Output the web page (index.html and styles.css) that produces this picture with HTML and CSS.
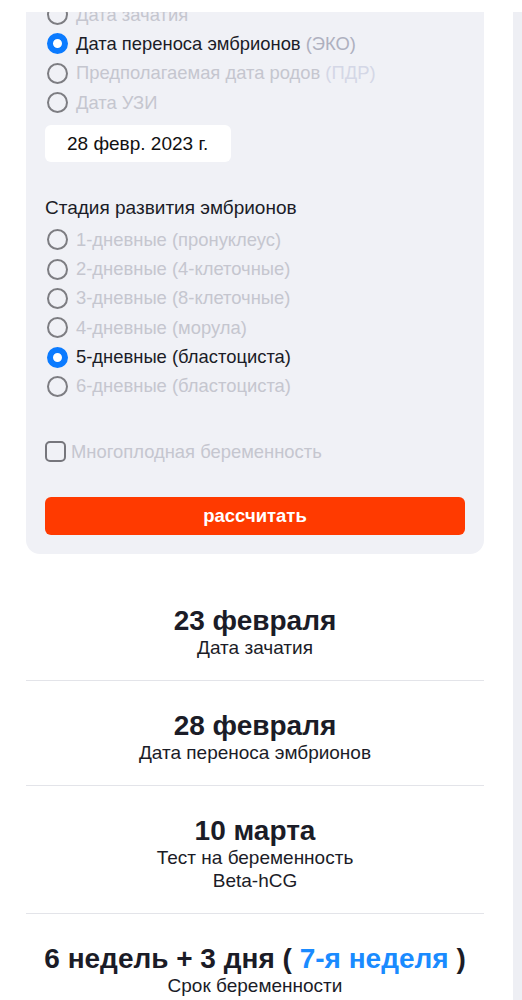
FILE: index.html
```html
<!DOCTYPE html>
<html lang="ru">
<head>
  <meta charset="UTF-8" />
  <meta name="viewport" content="width=device-width, initial-scale=1.0"/>
  <title>Калькулятор срока беременности ЭКО</title>
  <link rel="stylesheet" href="styles.css">
</head>
<body>
  <div class="topbar"></div>
  <div class="page">
    <main class="main">
      <form class="calc">
        <div class="options first">
          <label class="option muted"><input type="radio" name="base"> Дата зачатия</label>
          <label class="option"><input type="radio" name="base" checked> Дата переноса эмбрионов <span class="hint">(ЭКО)</span></label>
          <label class="option muted"><input type="radio" name="base"> Предполагаемая дата родов <span class="hint light">(ПДР)</span></label>
          <label class="option muted"><input type="radio" name="base"> Дата УЗИ</label>
        </div>

        <div class="date-field">28 февр. 2023 г.</div>

        <h3 class="group-title">Стадия развития эмбрионов</h3>
        <div class="options">
          <label class="option muted"><input type="radio" name="stage"> 1-дневные (пронуклеус)</label>
          <label class="option muted"><input type="radio" name="stage"> 2-дневные (4-клеточные)</label>
          <label class="option muted"><input type="radio" name="stage"> 3-дневные (8-клеточные)</label>
          <label class="option muted"><input type="radio" name="stage"> 4-дневные (морула)</label>
          <label class="option"><input type="radio" name="stage" checked> 5-дневные (бластоциста)</label>
          <label class="option muted"><input type="radio" name="stage"> 6-дневные (бластоциста)</label>
        </div>

        <label class="check muted"><input type="checkbox"> Многоплодная беременность</label>

        <button type="button" class="submit">рассчитать</button>
      </form>

      <div class="results">
        <div class="result">
          <div class="result-value">23 февраля</div>
          <div class="result-label">Дата зачатия</div>
        </div>
        <div class="result">
          <div class="result-value">28 февраля</div>
          <div class="result-label">Дата переноса эмбрионов</div>
        </div>
        <div class="result">
          <div class="result-value">10 марта</div>
          <div class="result-label">Тест на беременность<br>Beta-hCG</div>
        </div>
        <div class="result">
          <div class="result-value">6 недель + 3 дня ( <span class="week">7-я неделя</span> )</div>
          <div class="result-label">Срок беременности</div>
        </div>
      </div>
    </main>
    <div class="side"></div>
  </div>
</body>
</html>
```

FILE: styles.css
```css
body {
  margin: 0;
  font-family: "Liberation Sans", Arial, sans-serif;
  color: #1b1c27;
  background: #fff;
}

.topbar {
  height: 12px;
  background: #fff;
}

.page {
  display: flex;
}

.main {
  width: 458px;
  padding: 0 26px;
  flex: none;
}

.side {
  flex: 1;
  margin-left: 3px;
  background: #eeeff4;
}

.calc {
  background: #f0f1f6;
  border-radius: 0 0 14px 14px;
  padding: 0 19px 19px;
  overflow: hidden;
}

.options {
  display: flex;
  flex-direction: column;
}
.options.first {
  margin-top: -12px;
}

.option {
  display: flex;
  align-items: center;
  height: 29.3px;
  font-size: 18.4px;
  white-space: nowrap;
}
.option input {
  appearance: none;
  -webkit-appearance: none;
  width: 21px;
  height: 21px;
  margin: 0 8px 0 2px;
  border: 2px solid #7d7d82;
  border-radius: 50%;
  box-sizing: border-box;
  flex: none;
}
.option input:checked {
  border: 6px solid #0b7bff;
  background: #fff;
}
.option .hint {
  color: #aeb0bf;
  margin-left: 5px;
}
.option .hint.light {
  color: #d4d7e6;
}
.muted {
  color: #c5c6cf;
}

.date-field {
  display: inline-block;
  margin-top: 8px;
  width: 186px;
  height: 37px;
  line-height: 37px;
  box-sizing: border-box;
  padding-left: 22px;
  background: #fff;
  border-radius: 6px;
  font-size: 19px;
  color: #111;
}

.group-title {
  margin: 35px 0 6px;
  font-size: 19px;
  font-weight: normal;
  line-height: 22px;
}

.check {
  display: flex;
  align-items: center;
  margin-top: 40px;
  font-size: 18.4px;
  height: 22px;
}
.check input {
  appearance: none;
  -webkit-appearance: none;
  width: 21px;
  height: 21px;
  margin: 0 5px 0 0;
  border: 2px solid #76767c;
  border-radius: 5px;
  box-sizing: border-box;
}

.submit {
  display: block;
  width: 100%;
  height: 38px;
  margin-top: 34px;
  border: none;
  border-radius: 6px;
  background: #ff3a00;
  color: #fff;
  font-family: inherit;
  font-size: 18.5px;
  font-weight: bold;
}

.results {
  margin-top: 22px;
}
.result {
  text-align: center;
  padding: 30px 0 21px;
  border-bottom: 1px solid #e3e4e9;
}
.result:last-child {
  border-bottom: none;
}
.result-value {
  font-size: 28px;
  font-weight: bold;
  line-height: 30px;
}
.result-label {
  font-size: 19px;
  line-height: 23px;
}
.week {
  color: #1a8bff;
}
```
